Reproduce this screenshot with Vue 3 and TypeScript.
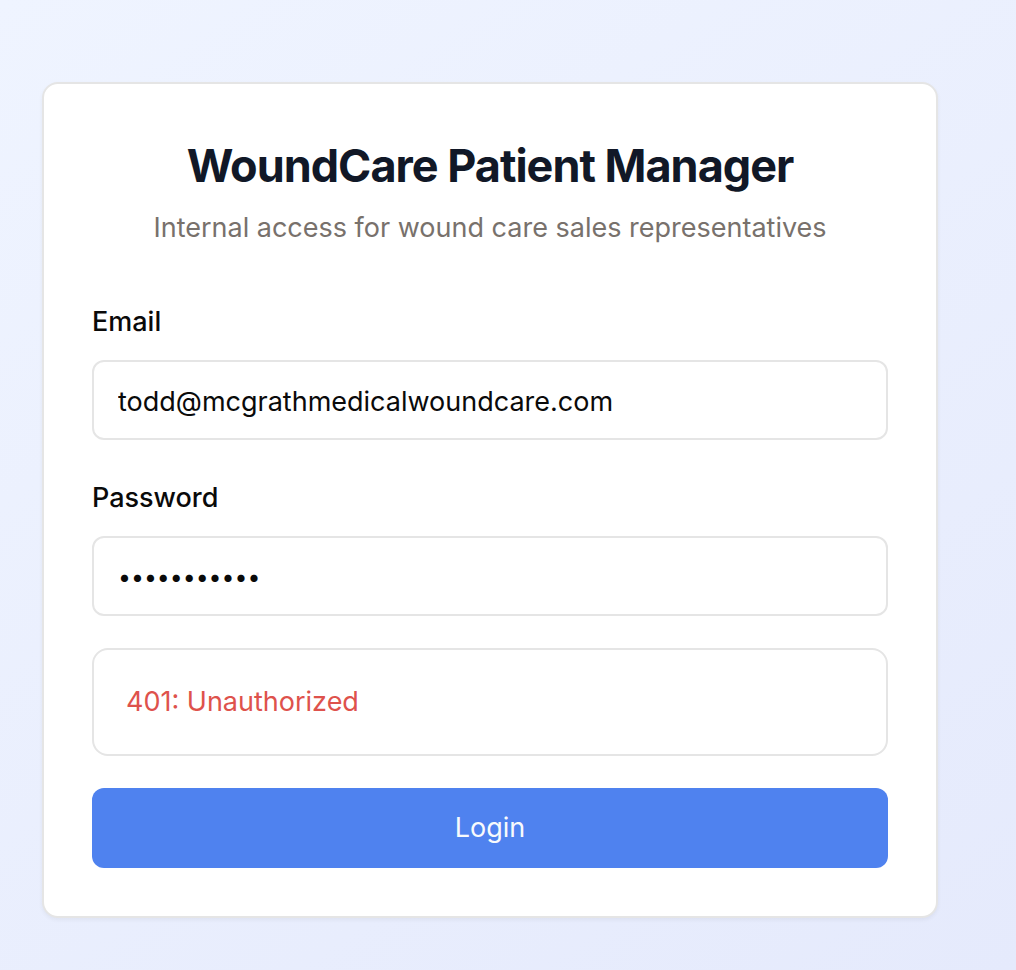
<script setup lang="ts">
import { ref } from 'vue'

const email = ref('todd@mcgrathmedicalwoundcare.com')
const password = ref('woundcare12')
const error = ref('401: Unauthorized')
</script>

<template>
  <main class="page">
    <section class="card">
      <header class="heading">
        <h1>WoundCare Patient Manager</h1>
        <p>Internal access for wound care sales representatives</p>
      </header>
      <form class="form" @submit.prevent>
        <div class="field">
          <label for="email">Email</label>
          <input id="email" v-model="email" type="email" autocomplete="email" />
        </div>
        <div class="field">
          <label for="password">Password</label>
          <input id="password" v-model="password" type="password" autocomplete="current-password" />
        </div>
        <div v-if="error" class="alert" role="alert">{{ error }}</div>
        <button type="submit">Login</button>
      </form>
    </section>
  </main>
</template>

<style>
body {
  margin: 0;
}
</style>

<style scoped>
.page {
  box-sizing: border-box;
  min-height: 100vh;
  padding: 82px 78px 52px 42px;
  background: linear-gradient(145deg, #eff4ff, #e5eafc);
  color: #0a0a0a;
  font-family: Inter, sans-serif;
  font-size: 27px;
  line-height: 40px;
}
.card {
  box-sizing: border-box;
  max-width: 896px;
  margin: 0 auto;
  padding: 48px;
  border: 2px solid #e5e5e5;
  border-radius: 16px;
  background: #fff;
  box-shadow: 0 2px 4px rgb(0 0 0 / 5%);
}
.heading {
  margin-bottom: 48px;
  text-align: center;
}
h1 {
  margin: 0;
  color: #111827;
  font-size: 45px;
  line-height: 68px;
  font-weight: 700;
  letter-spacing: -1px;
}
p {
  margin: 8px 0 0;
  color: #78716c;
}
.form {
  display: flex;
  flex-direction: column;
  gap: 32px;
}
.field {
  display: flex;
  flex-direction: column;
  gap: 12px;
}
label {
  font-weight: 500;
  line-height: 52px;
}
input {
  box-sizing: border-box;
  width: 100%;
  height: 80px;
  padding: 2px 24px 0;
  border: 2px solid #e5e5e5;
  border-radius: 12px;
  outline: none;
  background: #fff;
  color: #0a0a0a;
  font: inherit;
}
input[type='password'] {
  font-size: 23px;
}
.alert {
  padding: 32px;
  border: 2px solid #e5e5e5;
  border-radius: 16px;
  color: #de524c;
}
button {
  height: 80px;
  border: 0;
  border-radius: 12px;
  background: #4f82ef;
  color: #f8fafc;
  font: inherit;
  cursor: pointer;
}
</style>
